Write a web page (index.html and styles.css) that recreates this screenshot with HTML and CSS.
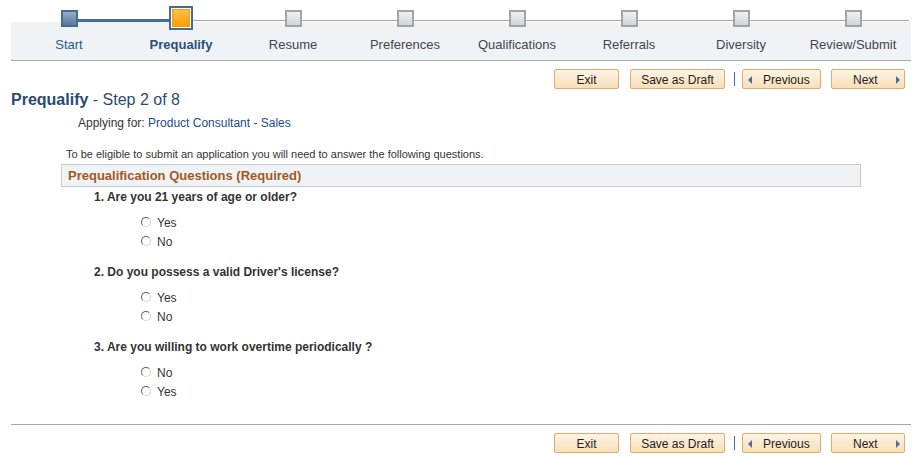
FILE: index.html
```html
<!DOCTYPE html>
<html lang="en">
<head>
<meta charset="utf-8">
<title>Prequalify - Step 2 of 8</title>
<link rel="stylesheet" href="styles.css">
</head>
<body>
<div class="stepper">
  <div class="step">
    <div class="track"><span class="line none"></span><span class="mark done"></span><span class="line done"></span></div>
    <div class="label label-done">Start</div>
  </div>
  <div class="step">
    <div class="track"><span class="line done"></span><span class="mark current"><span class="mark-inner"></span></span><span class="line"></span></div>
    <div class="label label-current">Prequalify</div>
  </div>
  <div class="step">
    <div class="track"><span class="line"></span><span class="mark"></span><span class="line"></span></div>
    <div class="label">Resume</div>
  </div>
  <div class="step">
    <div class="track"><span class="line"></span><span class="mark"></span><span class="line"></span></div>
    <div class="label">Preferences</div>
  </div>
  <div class="step">
    <div class="track"><span class="line"></span><span class="mark"></span><span class="line"></span></div>
    <div class="label">Qualifications</div>
  </div>
  <div class="step">
    <div class="track"><span class="line"></span><span class="mark"></span><span class="line"></span></div>
    <div class="label">Referrals</div>
  </div>
  <div class="step">
    <div class="track"><span class="line"></span><span class="mark"></span><span class="line"></span></div>
    <div class="label">Diversity</div>
  </div>
  <div class="step">
    <div class="track"><span class="line"></span><span class="mark"></span><span class="line"></span></div>
    <div class="label">Review/Submit</div>
  </div>
</div>

<div class="actions">
  <button class="btn btn-exit">Exit</button>
  <button class="btn btn-draft">Save as Draft</button>
  <span class="sep"></span>
  <button class="btn btn-prev"><svg class="arrow" width="4" height="8" viewBox="0 0 4 8"><polygon points="4,0 0,4 4,8" fill="#4d6e9e"/></svg><span>Previous</span></button>
  <button class="btn btn-next"><span>Next</span><svg class="arrow" width="4" height="8" viewBox="0 0 4 8"><polygon points="0,0 4,4 0,8" fill="#4d6e9e"/></svg></button>
</div>

<h1 class="title"><b>Prequalify</b> - Step 2 of 8</h1>
<div class="applying">Applying for: <a class="job">Product Consultant - Sales</a></div>
<div class="intro">To be eligible to submit an application you will need to answer the following questions.</div>
<div class="section">Prequalification Questions (Required)</div>

<div class="question">
  <div class="q-title">1. Are you 21 years of age or older?</div>
  <div class="options">
    <div class="opt"><span class="radio"></span>Yes</div>
    <div class="opt"><span class="radio"></span>No</div>
  </div>
</div>
<div class="question">
  <div class="q-title">2. Do you possess a valid Driver's license?</div>
  <div class="options">
    <div class="opt"><span class="radio"></span>Yes</div>
    <div class="opt"><span class="radio"></span>No</div>
  </div>
</div>
<div class="question">
  <div class="q-title">3. Are you willing to work overtime periodically ?</div>
  <div class="options">
    <div class="opt"><span class="radio"></span>No</div>
    <div class="opt"><span class="radio"></span>Yes</div>
  </div>
</div>

<div class="rule"></div>

<div class="actions">
  <button class="btn btn-exit">Exit</button>
  <button class="btn btn-draft">Save as Draft</button>
  <span class="sep"></span>
  <button class="btn btn-prev"><svg class="arrow" width="4" height="8" viewBox="0 0 4 8"><polygon points="4,0 0,4 4,8" fill="#4d6e9e"/></svg><span>Previous</span></button>
  <button class="btn btn-next"><span>Next</span><svg class="arrow" width="4" height="8" viewBox="0 0 4 8"><polygon points="0,0 4,4 0,8" fill="#4d6e9e"/></svg></button>
</div>
</body>
</html>
```
FILE: styles.css
```css
* { box-sizing: border-box; }
html, body { margin: 0; padding: 0; background: #fff; }
body {
  font-family: "Liberation Sans", Arial, sans-serif;
  font-size: 12px;
  color: #333;
  width: 920px;
  height: 466px;
  overflow: hidden;
}

/* stepper */
.stepper {
  display: flex;
  height: 61px;
  margin: 0 9px 0 11px;
  padding: 0 2px;
  border-bottom: 1px solid #a6a9ae;
  background: linear-gradient(to bottom, #fff 0, #fff 22px, #eff3f5 22px);
}
.step { width: 112px; display: flex; flex-direction: column; }
.track { height: 34px; display: flex; align-items: flex-start; }
.line { flex: 1; height: 1px; margin-top: 20px; background: #a2a5aa; }
.line.done { height: 3px; margin-top: 19px; background: #456c94; }
.line.none { background: transparent; }
.mark {
  width: 17px; height: 17px; margin-top: 10px;
  border: 2px solid #a4a4a6;
  background: linear-gradient(#eef0f2, #d2d5da);
}
.mark.done { border-color: #456c94; background: linear-gradient(#97abc6, #5a789f); }
.mark.current {
  width: 24px; height: 24px; margin-top: 6px;
  border: 2px solid #456c94; padding: 1px; background: #fff;
}
.mark-inner {
  display: block; width: 100%; height: 100%;
  border: 1px solid #f39a0e;
  background: linear-gradient(#ffc04a, #ff9d00);
}
.label {
  padding-top: 1px;
  text-align: center; font-size: 13px; line-height: 20px; color: #45454f;
}
.label-done { color: #2c5a8d; }
.label-current { color: #2c4f80; font-weight: bold; }

/* action bar */
.actions {
  display: flex; justify-content: flex-end; align-items: center;
  height: 20px; margin-top: 8px; padding-right: 15px;
}
.btn {
  height: 20px; padding: 0; padding-top: 1px;
  border: 1px solid #e2ab6d; border-radius: 2px;
  background: linear-gradient(#fdf4e6, #fadfb7);
  font-family: "Liberation Sans", Arial, sans-serif; font-size: 12px; color: #222;
  display: flex; align-items: center; justify-content: center;
}
.btn-exit { width: 65px; }
.btn-draft { width: 95px; margin-left: 11px; }
.sep { width: 1px; height: 14px; background: #5b5fa6; margin-left: 9px; }
.btn-prev { width: 79px; margin-left: 7px; justify-content: flex-start; padding-left: 5px; }
.btn-prev .arrow { margin-right: 11px; }
.btn-next { width: 74px; margin-left: 10px; justify-content: space-between; padding-left: 21px; padding-right: 4px; }

/* heading */
.title {
  margin: 1px 0 0; padding-left: 11px;
  font-size: 16px; line-height: 19px; font-weight: normal; color: #2b4a73;
}
.title b { font-weight: bold; }
.applying { margin-top: 7px; padding-left: 78px; line-height: 15px; }
.job { color: #1d4b8a; text-decoration: none; }
.intro { margin-top: 17px; padding-left: 66px; font-size: 11px; line-height: 13px; }
.section {
  margin: 3px 0 0 61px; width: 800px; height: 23px;
  border: 1px solid #c6cbd3; background: #eff3f5;
  padding-left: 6px; font-size: 13px; line-height: 21px; font-weight: bold; color: #a3581d;
}

/* questions */
.question { margin-top: 14px; }
.section + .question { margin-top: 3px; }
.q-title { padding-left: 94px; font-weight: bold; line-height: 15px; }
.options { margin-top: 8px; }
.opt { height: 19px; line-height: 19px; padding-top: 1px; display: flex; align-items: flex-start; padding-left: 141px; }
.radio {
  width: 10px; height: 10px; margin-top: 3px; margin-right: 6px;
  border-radius: 50%; border: 1px solid;
  border-color: #5f5f5f #d2d2d2 #d2d2d2 #5f5f5f;
  background: #fff;
}
.rule { height: 1px; margin: 23px 9px 0 11px; background: #a5a8ad; }
```
